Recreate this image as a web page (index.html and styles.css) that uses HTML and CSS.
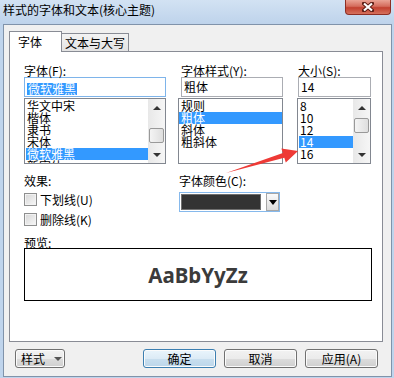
FILE: index.html
```html
<!DOCTYPE html>
<html lang="zh-CN">
<head>
    <meta charset="UTF-8">
    <title>样式的字体和文本(核心主题)</title>
    <link rel="stylesheet" href="styles.css">
</head>
<body>
<div class="window">
    <!-- Title bar -->
    <div class="titlebar">
        <span class="title">样式的字体和文本(核心主题)</span>
        <span class="close">
            <svg width="12" height="10" viewBox="0 0 12 10">
                <path d="M2 1.5L10 8.5M10 1.5L2 8.5" stroke="#5b1c14" stroke-width="4" stroke-linecap="square"/>
                <path d="M2 1.5L10 8.5M10 1.5L2 8.5" stroke="#fff" stroke-width="2.2"/>
            </svg>
        </span>
    </div>

    <div class="client">
        <div class="tabs">
            <div class="tab active">字体</div>
            <div class="tab">文本与大写</div>
        </div>

        <div class="panel">
            <!-- Font / style / size pickers -->
            <div class="pickers">
                <div class="field">
                    <label>字体(F):</label>
                    <div class="input focus"><span class="sel">微软雅黑</span></div>
                    <div class="list font">
                        <ul class="items">
                            <li>华文中宋</li>
                            <li>楷体</li>
                            <li>隶书</li>
                            <li>宋体</li>
                            <li class="on">微软雅黑</li>
                            <li>新宋体</li>
                        </ul>
                        <div class="scroll">
                            <div class="sb-btn"><i class="tri-up"></i></div>
                            <div class="thumb"></div>
                            <div class="sb-btn down"><i class="tri-down"></i></div>
                        </div>
                    </div>
                </div>
                <div class="field">
                    <label>字体样式(Y):</label>
                    <div class="input">粗体</div>
                    <div class="list style">
                        <ul class="items">
                            <li>规则</li>
                            <li class="on">粗体</li>
                            <li>斜体</li>
                            <li>粗斜体</li>
                        </ul>
                    </div>
                </div>
                <div class="field">
                    <label>大小(S):</label>
                    <div class="input">14</div>
                    <div class="list size">
                        <ul class="items">
                            <li>8</li>
                            <li>10</li>
                            <li>12</li>
                            <li class="on">14</li>
                            <li>16</li>
                        </ul>
                        <div class="scroll">
                            <div class="sb-btn"><i class="tri-up"></i></div>
                            <div class="thumb"></div>
                            <div class="sb-btn down"><i class="tri-down"></i></div>
                        </div>
                    </div>
                </div>
            </div>

            <!-- Effects and colour -->
            <div class="effects">
                <div>
                    <div class="head">效果:</div>
                    <div class="check"><span class="box"></span>下划线(U)</div>
                    <div class="check second"><span class="box"></span>删除线(K)</div>
                </div>
                <div>
                    <div class="head">字体颜色(C):</div>
                    <div class="combo">
                        <span class="swatch"></span>
                        <span class="drop"><i class="tri-down big"></i></span>
                    </div>
                </div>
            </div>

            <div class="plabel">预览:</div>
            <div class="preview">AaBbYyZz</div>
        </div>

        <div class="buttons">
            <div class="btn styles">样式<i class="tri-down grey"></i></div>
            <div class="btn default">确定</div>
            <div class="btn">取消</div>
            <div class="btn">应用(A)</div>
        </div>
    </div>

    <!-- red annotation arrow -->
    <svg class="arrow" width="394" height="378" viewBox="0 0 394 378">
        <polygon points="226,173 282.9,152.9 281.4,148.4 298,151 285.8,162.4 284.3,157.7" fill="#ee3a36"/>
    </svg>
</div>
</body>
</html>
```

FILE: styles.css
```css
/* ---- base ---- */
*,*::before,*::after{box-sizing:border-box;margin:0;padding:0;}
body{
    width:394px;height:378px;overflow:hidden;
    background:#bfd4ec;
    font-family:"Noto Sans CJK SC","Noto Sans",sans-serif;
    font-size:12px;color:#000;
}
.window{position:relative;height:378px;display:flex;flex-direction:column;}

/* ---- title bar ---- */
.titlebar{height:24px;display:flex;align-items:flex-start;background:linear-gradient(#d2e2f3,#bed3eb);}
.title{padding-left:3px;line-height:19px;}
.close{
    margin-left:auto;margin-right:3px;width:46px;height:15px;
    border:1px solid #8d2e24;border-top:0;border-radius:0 0 4px 4px;
    background:linear-gradient(#eaa395,#d46c5c 45%,#c2402f 55%,#d5715d);
    display:flex;align-items:center;justify-content:center;
}

/* ---- client area ---- */
.client{
    flex:1;margin:0 2px 1px 3px;
    border:1px solid #8093aa;background:#f0f0f0;
    padding:6px 8px 0 5px;
    display:flex;flex-direction:column;
}
.tabs{height:20px;display:flex;align-items:flex-end;}
.tab{
    height:18px;width:67px;padding:0 3px;
    border:1px solid #898c95;border-left:0;border-bottom:0;
    background:linear-gradient(#f3f3f3,#e3e3e3);line-height:17px;
}
.tab.active{
    position:relative;z-index:1;
    height:21px;width:53px;margin-bottom:-1px;padding-left:8px;
    border-left:1px solid #898c95;background:#fff;line-height:20px;
}
.panel{flex:1;background:#fff;border:1px solid #898c95;padding:12px 0 0 14px;}

/* ---- pickers ---- */
.pickers{display:grid;grid-template-columns:142px 102px 73px;column-gap:15px;}
.field label{display:block;height:13px;line-height:13px;}
.input{height:20px;border:1px solid #abadb3;padding-left:2px;line-height:18px;background:#fff;}
.input.focus{border-color:#7eb4ea;}
.sel{display:inline-block;line-height:12px;vertical-align:middle;background:#3399ff;color:#fff;padding:0 1px;}
.list{margin-top:1px;height:66px;border:1px solid #828790;display:flex;overflow:hidden;background:#fff;}
.list.style{margin-left:-3px;}
.list.size{margin-left:-1px;}
.items{list-style:none;flex:1;padding:1px 0 0 1px;overflow:hidden;}
.list.style .items{padding-left:0;}
.items li{height:12px;line-height:12px;padding-left:1px;white-space:nowrap;}
.list.style .items li{padding-left:2px;}
.items li.on{background:#3399ff;color:#fff;}

.scroll{width:17px;display:flex;flex-direction:column;background:linear-gradient(90deg,#e8e8e8,#f6f6f6);}
.sb-btn{height:17px;display:flex;align-items:center;justify-content:center;}
.sb-btn.down{margin-top:auto;}
.thumb{height:15px;margin:0 1px;border:1px solid #999;border-radius:2px;background:linear-gradient(90deg,#f4f4f4,#dedede);}
.font .thumb{margin-top:12px;}
.size .thumb{margin-top:2px;}
.tri-up,.tri-down{width:0;height:0;border-left:4px solid transparent;border-right:4px solid transparent;}
.tri-up{border-bottom:4px solid #333;}
.tri-down{border-top:4px solid #333;}
.tri-down.big{border-left-width:4px;border-right-width:4px;border-top:5px solid #000;}
.tri-down.grey{border-top-color:#555;margin-left:9px;}

/* ---- effects ---- */
.effects{display:grid;grid-template-columns:155px auto;margin-top:10px;}
.head{line-height:13px;height:13px;}
.check{display:flex;align-items:center;height:13px;margin-top:6px;line-height:13px;}
.check.second{margin-top:7px;}
.box{
    width:13px;height:13px;margin-right:3px;
    border:1px solid #8e8f8f;
    background:linear-gradient(135deg,#d6d6d6,#f8f8f8);
    box-shadow:inset 0 0 0 1px #f2f2f2;
}
.combo{
    width:101px;height:20px;margin-top:5px;
    border:1px solid #86b9ec;background:#fff;
    display:flex;align-items:center;padding-left:1px;
}
.swatch{width:80px;height:16px;background:#333;border:1px solid #6f6f6f;}
.drop{
    margin-left:auto;width:13px;height:18px;
    border:1px solid #a7a7a7;background:linear-gradient(#fbfbfb,#dcdcdc);
    display:flex;align-items:center;justify-content:center;
}

/* ---- preview ---- */
.plabel{height:11px;line-height:11px;margin-top:11px;}
.preview{
    width:348px;height:53px;border:1px solid #000;
    display:flex;align-items:center;justify-content:center;
    font-family:"Noto Sans",sans-serif;font-weight:700;font-size:20.5px;color:#3b3b3b;
}

/* ---- bottom buttons ---- */
.buttons{display:flex;align-items:center;height:19px;margin:7px 0 8px;padding:0 5px 0 6px;gap:8px;}
.btn{
    height:19px;width:73px;
    border:1px solid #707070;border-radius:3px;
    background:linear-gradient(#f2f2f2,#ebebeb 50%,#dddddd 50%,#cfcfcf);
    box-shadow:inset 0 0 0 1px #fbfbfb;
    display:flex;align-items:center;justify-content:center;
}
.btn.styles{width:50px;margin-right:auto;justify-content:flex-start;padding-left:5px;}
.btn.default{border-color:#3c7fb1;background:linear-gradient(#eaf5fc,#dcebf6 50%,#c9dfef 50%,#bcd6ea);}

.arrow{position:absolute;left:0;top:0;pointer-events:none;}
```
